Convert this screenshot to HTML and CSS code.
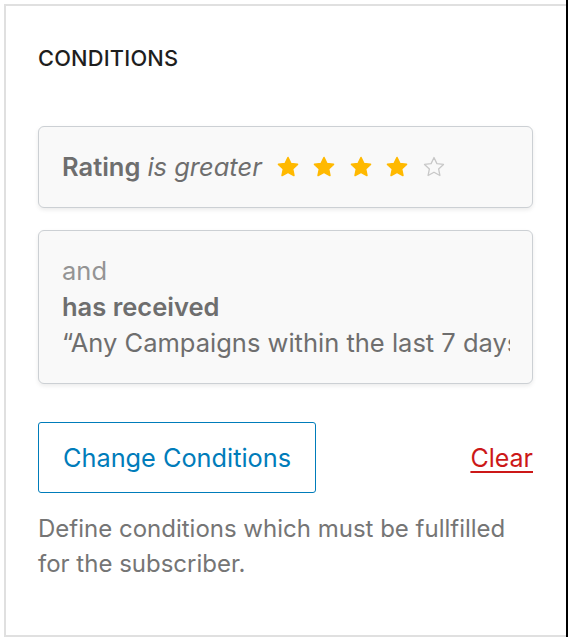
FILE: index.html
```html
<!DOCTYPE html>
<html>
<head>
<meta charset="utf-8">
<link rel="stylesheet" href="styles.css">
</head>
<body>
<div class="frame">
  <section class="panel">
    <h2 class="title">CONDITIONS</h2>
    <div class="card">
      <div class="line"><strong>Rating</strong> <em>is greater</em>
        <span class="stars">
          <svg class="star" viewBox="0 0 24 24"><polygon points="12,2.5 14.9,8.6 21.5,9.4 16.6,13.9 17.9,20.5 12,17.2 6.1,20.5 7.4,13.9 2.5,9.4 9.1,8.6"/></svg>
          <svg class="star" viewBox="0 0 24 24"><polygon points="12,2.5 14.9,8.6 21.5,9.4 16.6,13.9 17.9,20.5 12,17.2 6.1,20.5 7.4,13.9 2.5,9.4 9.1,8.6"/></svg>
          <svg class="star" viewBox="0 0 24 24"><polygon points="12,2.5 14.9,8.6 21.5,9.4 16.6,13.9 17.9,20.5 12,17.2 6.1,20.5 7.4,13.9 2.5,9.4 9.1,8.6"/></svg>
          <svg class="star" viewBox="0 0 24 24"><polygon points="12,2.5 14.9,8.6 21.5,9.4 16.6,13.9 17.9,20.5 12,17.2 6.1,20.5 7.4,13.9 2.5,9.4 9.1,8.6"/></svg>
          <svg class="star empty" viewBox="0 0 24 24"><polygon points="12,2.5 14.9,8.6 21.5,9.4 16.6,13.9 17.9,20.5 12,17.2 6.1,20.5 7.4,13.9 2.5,9.4 9.1,8.6"/></svg>
        </span>
      </div>
    </div>
    <div class="card">
      <div class="line muted">and</div>
      <div class="line"><strong>has received</strong></div>
      <div class="line nowrap">“Any Campaigns within the last 7 days”</div>
    </div>
    <div class="actions">
      <button class="btn">Change Conditions</button>
      <a class="clear" href="#">Clear</a>
    </div>
    <p class="help">Define conditions which must be fullfilled for the subscriber.</p>
  </section>
  <div class="edge"></div>
</div>
</body>
</html>
```

FILE: styles.css
```css
html, body {
  margin: 0;
  padding: 0;
  background: #fff;
}
body {
  font-family: Inter, "Noto Sans", sans-serif;
  -webkit-font-smoothing: antialiased;
}
.frame {
  display: flex;
  height: 637px;
  margin-left: 4px;
}
.panel {
  flex: 1;
  min-width: 0;
  margin-top: 4px;
  border-left: 2px solid #e0e0e0;
  border-top: 2px solid #e0e0e0;
  border-bottom: 2px solid #e0e0e0;
  padding: 38px 33px 0 32px;
  box-sizing: border-box;
}
.edge {
  width: 2px;
  flex: none;
  background: #000;
}
.title {
  margin: 0 0 54px;
  font-size: 21.8px;
  line-height: 28px;
  font-weight: 500;
  color: #1e1e1e;
  letter-spacing: 0.2px;
}
.card {
  background: #f9f9f9;
  border: 1px solid #ccd0d4;
  border-radius: 6px;
  box-shadow: 0 2px 4px rgba(0, 0, 0, 0.08);
  padding: 22px 22px 22px 23px;
  margin-bottom: 22px;
  font-size: 25.5px;
  line-height: 36px;
  color: #6e6e6e;
  overflow: hidden;
}
.card strong {
  font-weight: 600;
}
.card em {
  font-style: italic;
}
.line {
  display: flex;
  align-items: center;
  gap: 7px;
  white-space: nowrap;
  min-width: 0;
}
.line.nowrap {
  overflow: hidden;
}
.muted {
  color: #949494;
}
.stars {
  display: inline-flex;
  align-items: center;
  gap: 12.5px;
  margin-left: 7px;
}
.star {
  width: 24px;
  height: 24px;
  display: block;
}
.star polygon {
  fill: #ffb900;
  stroke: #ffb900;
  stroke-width: 1.6;
  stroke-linejoin: round;
}
.star.empty polygon {
  fill: none;
  stroke: #c8c8c8;
  stroke-width: 1.3;
}
.actions {
  display: flex;
  align-items: center;
  justify-content: space-between;
  margin-top: 38px;
}
.btn {
  height: 71px;
  padding: 0 24px;
  border: 1.5px solid #007cba;
  border-radius: 3px;
  background: #fff;
  color: #007cba;
  font-family: Inter, "Noto Sans", sans-serif;
  font-size: 25.3px;
  line-height: 36px;
}
.clear {
  color: #cc1818;
  font-size: 25px;
  text-decoration: underline;
  text-underline-offset: 4px;
  text-decoration-thickness: 2px;
}
.help {
  margin: 18px 0 0;
  font-size: 24px;
  line-height: 35px;
  color: #757575;
}
```
